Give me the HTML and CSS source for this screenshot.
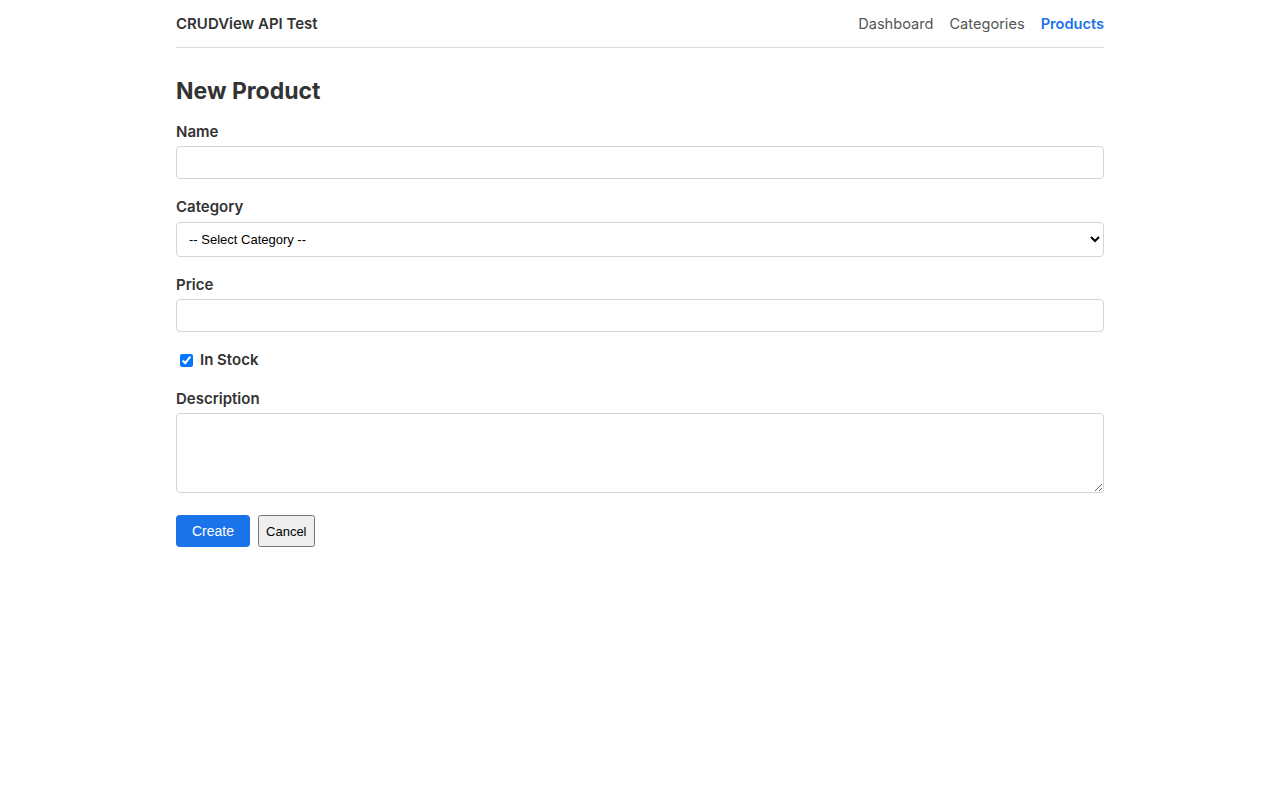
FILE: index.html
```html
<!DOCTYPE html>
<html lang="en">
<head>
    <meta charset="UTF-8">
    <meta name="viewport" content="width=device-width, initial-scale=1.0">
    <title>New Product - CRUDView API Test</title>
    <link rel="stylesheet" href="styles.css">
</head>
<body>
    <div class="container">
        <header class="topbar">
            <div class="brand">CRUDView API Test</div>
            <nav class="nav">
                <a href="#">Dashboard</a>
                <a href="#">Categories</a>
                <a href="#" class="active">Products</a>
            </nav>
        </header>

        <main>
            <h1>New Product</h1>
            <form class="product-form">
                <div class="field">
                    <label for="name">Name</label>
                    <input type="text" id="name">
                </div>
                <div class="field select-field">
                    <label for="category">Category</label>
                    <select id="category">
                        <option>-- Select Category --</option>
                    </select>
                </div>
                <div class="field">
                    <label for="price">Price</label>
                    <input type="text" id="price">
                </div>
                <div class="field check">
                    <label><input type="checkbox" checked> In Stock</label>
                </div>
                <div class="field">
                    <label for="description">Description</label>
                    <textarea id="description"></textarea>
                </div>
                <div class="actions">
                    <button type="submit" class="btn-primary">Create</button>
                    <button type="button">Cancel</button>
                </div>
            </form>
        </main>
    </div>
</body>
</html>
```

FILE: styles.css
```css
body {
    font-family: Inter, "Noto Sans", sans-serif;
    color: #333;
    margin: 0;
    background-color: #ffffff;
}
.container {
    width: 928px;
    margin: 0 auto;
}
.topbar {
    display: flex;
    justify-content: space-between;
    align-items: center;
    height: 47px;
    border-bottom: 1px solid #dcdcdc;
}
.brand {
    font-size: 15px;
    font-weight: 600;
}
.nav {
    display: flex;
    gap: 16px;
}
.nav a {
    color: #555;
    text-decoration: none;
    font-size: 14.6px;
}
.nav a.active {
    color: #1a73e8;
    font-weight: 600;
}
h1 {
    font-size: 23px;
    font-weight: 700;
    line-height: 29px;
    margin: 29px 0 17px;
}
.field {
    margin-bottom: 19px;
}
.field label {
    display: block;
    font-size: 15px;
    font-weight: 600;
    line-height: 18px;
    margin-bottom: 5px;
}
.field input[type="text"],
.field textarea {
    display: block;
    box-sizing: border-box;
    width: 100%;
    height: 33px;
    border: 1px solid #d4d4d4;
    border-radius: 4px;
    padding: 0 8px;
    font-size: 14px;
}
.field textarea {
    height: 80px;
    padding: 6px 8px;
    resize: vertical;
}
.field select {
    display: block;
    box-sizing: border-box;
    width: 100%;
    height: 35px;
    border: 1px solid #d4d4d4;
    border-radius: 4px;
    background-color: #fff;
    padding: 0 8px;
    font-family: "Liberation Sans", Arial, sans-serif;
    font-size: 13px;
    color: #000;
}
.select-field label {
    margin-bottom: 6px;
}
.field.check {
    margin-bottom: 21px;
}
.field.check label {
    display: flex;
    align-items: center;
    margin-bottom: 0;
}
.field.check input {
    width: 13px;
    height: 13px;
    margin: 0 7px 0 4px;
}
.actions {
    display: flex;
    gap: 8px;
    margin-top: 22px;
}
.actions button {
    font-family: "Liberation Sans", Arial, sans-serif;
    font-size: 13px;
}
.actions .btn-primary {
    background-color: #1a73e8;
    color: #fff;
    border: none;
    border-radius: 4px;
    height: 32px;
    padding: 0 16px;
    font-size: 14px;
    cursor: pointer;
}
```
